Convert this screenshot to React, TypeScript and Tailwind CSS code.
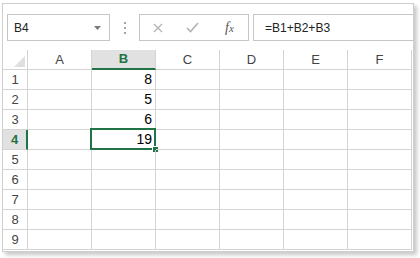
import React from 'react';

const COLS = ['A', 'B', 'C', 'D', 'E', 'F'];
const ROWS = [1, 2, 3, 4, 5, 6, 7, 8, 9];
const values: Record<string, string> = { B1: '8', B2: '5', B3: '6', B4: '19' };

const font = { fontFamily: '"Liberation Sans", Arial, sans-serif' };

function FormulaBar() {
  return (
    <div className="h-[46px] pt-[10px] pl-[4px] flex items-start">
      {/* Name box */}
      <div className="w-[103px] h-[27px] border border-[#c6c6c6] flex items-center justify-between pl-[6px] pr-[8px]">
        <span className="text-[12px] text-[#222]">B4</span>
        <svg width="7" height="4" viewBox="0 0 7 4">
          <path d="M0 0 L7 0 L3.5 4 Z" fill="#7a7a7a" />
        </svg>
      </div>
      {/* Dots */}
      <div className="w-[29px] h-[27px] flex flex-col items-center justify-center gap-[3px]">
        <div className="w-[2px] h-[2px] bg-[#a6a6a6]" />
        <div className="w-[2px] h-[2px] bg-[#a6a6a6]" />
        <div className="w-[2px] h-[2px] bg-[#a6a6a6]" />
      </div>
      {/* Cancel / enter / fx */}
      <div className="w-[110px] h-[27px] border border-[#c6c6c6] flex items-center">
        <div className="w-[13px]" />
        <svg width="10" height="10" viewBox="0 0 10 10">
          <path d="M1 1 L9 9 M9 1 L1 9" stroke="#b3b3b3" strokeWidth="1.3" />
        </svg>
        <div className="w-[23px]" />
        <svg width="13" height="11" viewBox="0 0 13 11">
          <path d="M1 6 L4.5 9.5 L12 1" stroke="#b3b3b3" strokeWidth="1.6" fill="none" />
        </svg>
        <div className="w-[26px]" />
        <span
          className="text-[14px] italic text-[#555]"
          style={{ fontFamily: '"Liberation Serif", "Times New Roman", serif' }}
        >
          f<span className="text-[11px]">x</span>
        </span>
      </div>
      <div className="w-[4px]" />
      {/* Formula input */}
      <div className="flex-1 h-[27px] border border-r-0 border-[#c6c6c6] flex items-center pl-[11px]">
        <span className="text-[12px] text-[#222]">=B1+B2+B3</span>
      </div>
    </div>
  );
}

function HeaderRow() {
  return (
    <div className="flex h-[20px]">
      <div className="w-[25px] border-r border-b border-[#d4d4d4] flex items-end justify-end pr-[2px] pb-[2px]">
        <svg width="11" height="11" viewBox="0 0 11 11">
          <path d="M11 0 L11 11 L0 11 Z" fill="#dfdfdf" />
        </svg>
      </div>
      {COLS.map((c) =>
        c === 'B' ? (
          <div
            key={c}
            className="w-[64px] bg-[#e1e1e1] border-r border-[#d4d4d4] border-b-2 border-b-[#217346] flex items-center justify-center text-[13px] font-bold text-[#217346]"
          >
            {c}
          </div>
        ) : (
          <div
            key={c}
            className="w-[64px] border-r border-b border-[#d4d4d4] flex items-center justify-center text-[13px] text-[#444]"
          >
            {c}
          </div>
        )
      )}
    </div>
  );
}

function GridRow({ r }: { r: number }) {
  const active = r === 4;
  return (
    <div className="flex h-[20px]">
      {active ? (
        <div className="w-[25px] bg-[#e1e1e1] border-b border-[#d4d4d4] border-r-2 border-r-[#217346] flex items-end justify-center pb-[3px] text-[13px] leading-none font-bold text-[#217346]">
          {r}
        </div>
      ) : (
        <div className="w-[25px] border-r border-b border-[#d4d4d4] flex items-end justify-center pb-[3px] text-[13px] leading-none text-[#444]">
          {r}
        </div>
      )}
      {COLS.map((c) => {
        const id = `${c}${r}`;
        const selected = id === 'B4';
        return (
          <div
            key={c}
            className="relative w-[64px] border-r border-b border-[#d4d4d4] flex items-end justify-end pr-[3px] pb-[3px] text-[14px] leading-none text-black"
          >
            {values[id]}
            {selected && (
              <>
                <div className="absolute left-[-2px] top-[-2px] right-[-1px] bottom-[-1px] border-2 border-[#217346]" />
                <div className="absolute right-[-4px] bottom-[-4px] w-[7px] h-[7px] bg-[#217346] border border-white" />
              </>
            )}
          </div>
        );
      })}
    </div>
  );
}

export default function App() {
  return (
    <div className="w-[420px] h-[258px] bg-white pt-[3px] pl-[2px]" style={font}>
      <div className="w-[412px] h-[249px] bg-white border border-[#cfcfcf] shadow-[3px_3px_4px_rgba(0,0,0,0.22)] flex flex-col">
        <FormulaBar />
        <HeaderRow />
        {ROWS.map((r) => (
          <GridRow key={r} r={r} />
        ))}
      </div>
    </div>
  );
}
